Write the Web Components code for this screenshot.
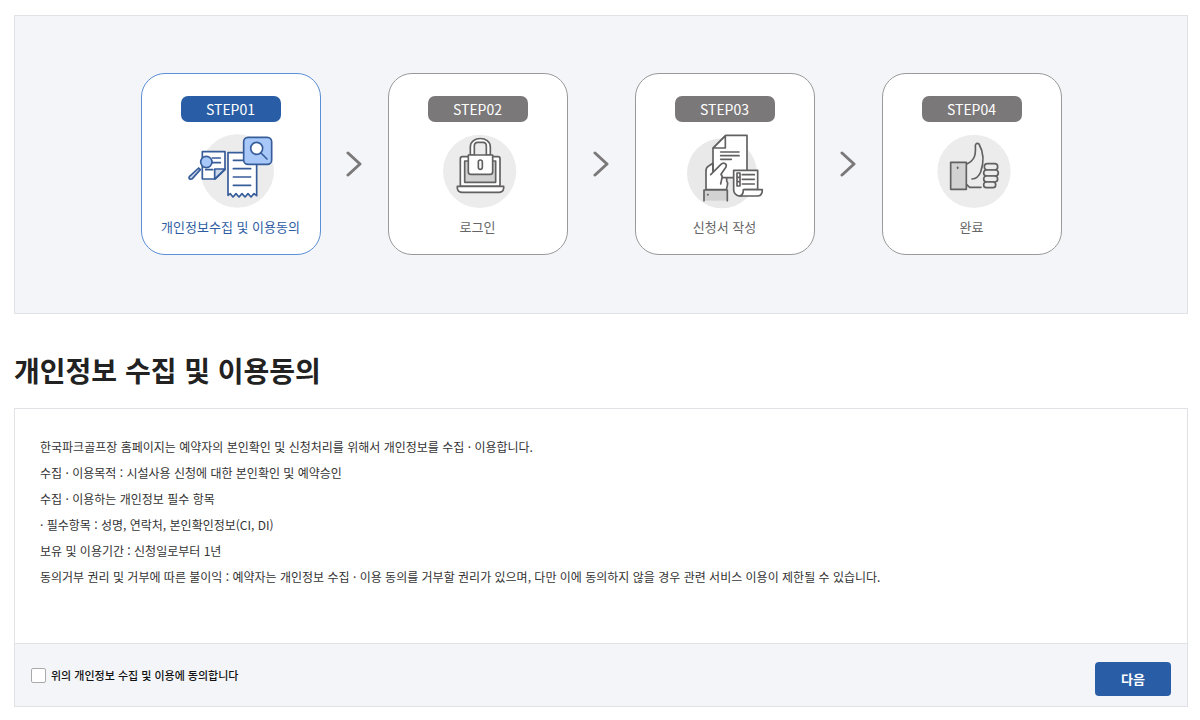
<!DOCTYPE html>
<html lang="ko">
<head>
<meta charset="utf-8">
<meta name="viewport" content="width=device-width, initial-scale=1">
<title>개인정보 수집 및 이용동의</title>
<style>
  body {
    margin: 0;
    background: #fff;
    color: #222;
    font-family: "Noto Sans CJK KR", "Noto Sans", sans-serif;
  }
</style>
</head>
<body>
<agreement-page></agreement-page>

<template id="tpl-page">
  <style>
    :host { display: block; padding: 15px 12px 12px 14px; }
    h1 { margin: 36px 0 18px; font-size: 28px; line-height: 40px; font-weight: 700; }
    p { margin: 0; }
  </style>
  <main>
    <step-list>
      <step-card step="STEP01" icon="collect" active>개인정보수집 및 이용동의</step-card>
      <step-arrow></step-arrow>
      <step-card step="STEP02" icon="login">로그인</step-card>
      <step-arrow></step-arrow>
      <step-card step="STEP03" icon="form">신청서 작성</step-card>
      <step-arrow></step-arrow>
      <step-card step="STEP04" icon="done">완료</step-card>
    </step-list>
    <h1>개인정보 수집 및 이용동의</h1>
    <consent-box>
      <p>한국파크골프장 홈페이지는 예약자의 본인확인 및 신청처리를 위해서 개인정보를 수집 · 이용합니다.</p>
      <p>수집 · 이용목적 : 시설사용 신청에 대한 본인확인 및 예약승인</p>
      <p>수집 · 이용하는 개인정보 필수 항목</p>
      <p>· 필수항목 : 성명, 연락처, 본인확인정보(CI, DI)</p>
      <p>보유 및 이용기간 : 신청일로부터 1년</p>
      <p>동의거부 권리 및 거부에 따른 불이익 : 예약자는 개인정보 수집 · 이용 동의를 거부할 권리가 있으며, 다만 이에 동의하지 않을 경우 관련 서비스 이용이 제한될 수 있습니다.</p>
    </consent-box>
  </main>
</template>

<template id="tpl-steps">
  <style>
    :host {
      display: flex; justify-content: center; align-items: center;
      padding: 57px 16px 58px; background: #f3f5f9; border: 1px solid #e1e2e5;
    }
  </style>
  <slot></slot>
</template>

<template id="tpl-card">
  <style>
    :host {
      --line: #999; --pill: #7b7879; --label: #666;
      display: flex; flex-direction: column; align-items: center;
      box-sizing: border-box; flex: 0 1 180px;
      padding: 22px 4px 17px; background: #fff;
      border: 1px solid var(--line); border-radius: 24px;
    }
    :host([active]) { --line: #5b8fd6; --pill: #295ea6; --label: #2d5ca3; }
    .pill {
      width: 100px; border-radius: 7px; background: var(--pill); color: #fff;
      font-size: 14px; line-height: 26px; text-align: center;
    }
    .icon { margin: 10px 0 5px; height: 80px; }
    .icon svg { display: block; }
    .label { color: var(--label); font-size: 13px; line-height: 20px; white-space: nowrap; }
  </style>
  <div class="pill"></div>
  <div class="icon"></div>
  <div class="label"><slot></slot></div>
</template>

<template id="tpl-arrow">
  <style>
    :host { display: flex; justify-content: center; flex: 0 1 67px; }
  </style>
  <svg width="16" height="28" viewBox="0 0 16 28" fill="none" stroke="#7b7879" stroke-width="3" stroke-linecap="round" stroke-linejoin="round" aria-hidden="true"><path d="M2 3 14 14 2 25"/></svg>
</template>

<template id="tpl-consent">
  <style>
    :host { display: block; border: 1px solid #e1e2e5; }
    .text { padding: 25px 25px 53px; color: #333; font-size: 12px; line-height: 26px; }
    form {
      display: flex; justify-content: space-between; align-items: flex-start;
      padding: 18px 16px 10px; background: #f3f5f9; border-top: 1px solid #e1e2e5;
    }
    label { display: flex; align-items: center; gap: 5px; color: #111; font-size: 11px; line-height: 26px; font-weight: 500; }
    input {
      appearance: none; box-sizing: border-box; width: 15px; height: 15px; margin: 0;
      background: #fff; border: 1px solid #aaa; border-radius: 2px;
    }
    input:checked { background: #295ea6; border-color: #295ea6; }
    button {
      width: 76px; padding: 0; border: 0; border-radius: 4px; background: #295ea6; color: #fff;
      font-family: inherit; font-size: 13px; line-height: 34px; font-weight: 700; cursor: pointer;
    }
  </style>
  <div class="text"><slot></slot></div>
  <form>
    <label for="agree"><input type="checkbox" id="agree">위의 개인정보 수집 및 이용에 동의합니다</label>
    <button type="button">다음</button>
  </form>
</template>

<script>
  const ICONS = {
    collect: `<svg width="96" height="80" viewBox="159 201 288 240" fill="#fff" stroke="#365c99" stroke-width="5" stroke-linejoin="round" stroke-linecap="round" aria-hidden="true">
      <circle cx="322" cy="318" r="110" fill="#ececec" stroke="none"/>
      <path d="M217 260H285V314L256 342H217Z"/>
      <path d="M285 312H254V342Z" fill="#c9d6ea"/>
      <path d="M247 279H271M247 293H271M227 314H248" fill="none"/>
      <circle cx="229" cy="291" r="17" fill="#a9c8fa"/>
      <path d="M206 309 178 335Q175 340 181 343L187 341 211 314Z" fill="#c9d6ea"/>
      <path d="M294 263H380V392L372 386 363 396 354 386 345 396 336 386 327 396 318 386 309 396 301 386 294 391Z"/>
      <path d="M310 286H340M310 311H362M310 336H362M310 361H362" fill="none"/>
      <rect x="341" y="217" width="84" height="81" rx="13" fill="#a9c8fa"/>
      <circle cx="380" cy="250" r="18"/>
      <path d="M393 264 411 282" fill="none"/>
    </svg>`,
    login: `<svg width="96" height="80" viewBox="150 201 288 240" fill="#fff" stroke="#626061" stroke-width="5" stroke-linejoin="round" stroke-linecap="round" aria-hidden="true">
      <circle cx="299" cy="319" r="110" fill="#ececec" stroke="none"/>
      <path d="M241 364V281Q241 275 247 275H354Q360 275 360 281V364Z"/>
      <path d="M254 288H347V352H254Z" fill="#d2d2d2"/>
      <path d="M232 364H371V370Q369 382 356 382H247Q234 382 232 370Z"/>
      <path d="M271 270V246C271 212 331 212 331 246V270H319V243Q319 232 309 232H293Q283 232 283 243V270Z"/>
      <path d="M265 270H338V320Q338 328 330 328H273Q265 328 265 320Z"/>
      <rect x="295" y="285" width="12" height="28" rx="6"/>
    </svg>`,
    form: `<svg width="96" height="80" viewBox="155 201 288 240" fill="#fff" stroke="#626061" stroke-width="5" stroke-linejoin="round" stroke-linecap="round" aria-hidden="true">
      <circle cx="290" cy="325" r="105" fill="#e9e9e9" stroke="none"/>
      <path d="M242 374V318Q242 307 250 303L264 294 304 338V347Q309 354 306 362L303 374Z"/>
      <path d="M236 407V375H306V407" fill="#d2d2d2"/>
      <path d="M247 389H248" stroke-width="5"/>
      <path d="M301 211H365V338H263V249Z"/>
      <path d="M300 213V249H264Z"/>
      <path d="M286 261H341M286 272H341M286 283H318" fill="none"/>
      <path d="M256 329 286 299C294 291 306 295 302 306L287 328Q293 334 289 343L286 357 262 357 250 329Z" stroke="none"/>
      <path d="M256 329 286 299C294 291 306 295 302 306L287 328Q293 334 289 343L286 357M263 296V318" fill="none"/>
      <path d="M325 316H397V374H358Q356 393 342 393Q325 389 325 374Z"/>
      <path d="M354 374H411Q411 391 398 393H342Q354 391 354 374Z"/>
      <path d="M335 324H344V363H335ZM335 337H344M335 350H344" fill="none"/>
      <path d="M351 329H387M351 343H387M351 357H387" fill="none"/>
    </svg>`,
    done: `<svg width="96" height="80" viewBox="162 201 288 240" fill="#fff" stroke="#626061" stroke-width="5" stroke-linejoin="round" stroke-linecap="round" aria-hidden="true">
      <circle cx="312" cy="319" r="110" fill="#ececec" stroke="none"/>
      <path d="M290 297C314 286 318 270 316 242Q318 232 327 237C341 262 343 290 332 321Q324 341 306 342M290 359 299 367H333" fill="none"/>
      <path d="M242 292H289V373H242Z" fill="#d2d2d2"/>
      <path d="M263 307V310"/>
      <g fill="#ececec">
        <rect x="343" y="296" width="40" height="19" rx="9"/>
        <rect x="341" y="315" width="44" height="18" rx="9"/>
        <rect x="341" y="333" width="42" height="18" rx="9"/>
        <rect x="341" y="351" width="36" height="17" rx="8"/>
      </g>
    </svg>`
  };

  class TemplateElement extends HTMLElement {
    constructor() {
      super();
      const tpl = document.getElementById(this.constructor.template);
      this.attachShadow({ mode: "open" }).append(tpl.content.cloneNode(true));
    }
  }

  customElements.define("step-arrow", class extends TemplateElement { static template = "tpl-arrow"; });
  customElements.define("step-card", class extends TemplateElement {
    static template = "tpl-card";
    connectedCallback() {
      this.shadowRoot.querySelector(".pill").textContent = this.getAttribute("step");
      this.shadowRoot.querySelector(".icon").innerHTML = ICONS[this.getAttribute("icon")] || "";
    }
  });
  customElements.define("step-list", class extends TemplateElement { static template = "tpl-steps"; });
  customElements.define("consent-box", class extends TemplateElement { static template = "tpl-consent"; });
  customElements.define("agreement-page", class extends TemplateElement { static template = "tpl-page"; });
</script>
</body>
</html>
